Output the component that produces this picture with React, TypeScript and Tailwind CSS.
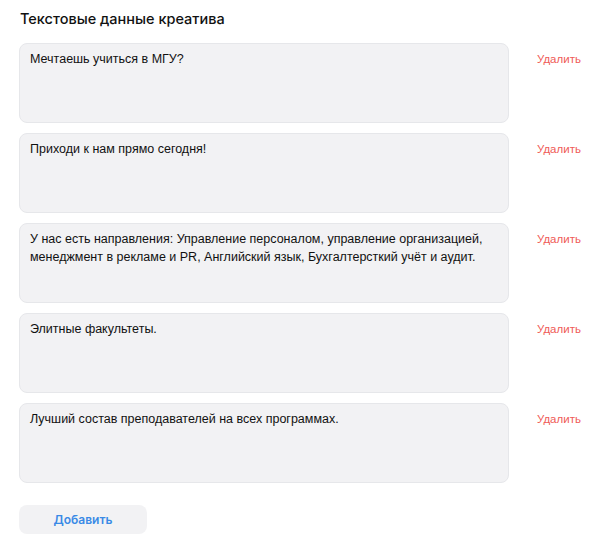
const texts = [
  "Мечтаешь учиться в МГУ?",
  "Приходи к нам прямо сегодня!",
  "У нас есть направления: Управление персоналом, управление организацией, менеджмент в рекламе и PR, Английский язык, Бухгалтерсткий учёт и аудит.",
  "Элитные факультеты.",
  "Лучший состав преподавателей на всех программах.",
];

export default function App() {
  return (
    <div className="min-h-[552px] w-full bg-white px-[19px] pt-[9px] font-['Liberation_Sans',Arial,sans-serif] text-[#1a1a1a]">
      <h2 className="pl-[1px] font-['Inter',sans-serif] text-[14.5px] leading-[20px] font-medium text-[#111]">
        Текстовые данные креатива
      </h2>
      <div className="mt-[14px] flex flex-col gap-[10px]">
        {texts.map((t, i) => (
          <div key={i} className="flex items-start">
            <div className="h-[80px] w-[490px] rounded-[8px] border border-[#e6e7ea] bg-[#f2f2f4] px-[10px] pt-[6px] text-[12.5px] leading-[18px] text-[#111]">
              {t}
            </div>
            <button className="ml-[28px] pt-[8px] text-[11.5px] leading-[16px] text-[#ef5b57]">
              Удалить
            </button>
          </div>
        ))}
      </div>
      <button className="mt-[22px] h-[29px] w-[128px] rounded-[8px] bg-[#f2f2f4] font-['Inter',sans-serif] text-[12px] font-semibold text-[#3a8ae6]">
        Добавить
      </button>
    </div>
  );
}
